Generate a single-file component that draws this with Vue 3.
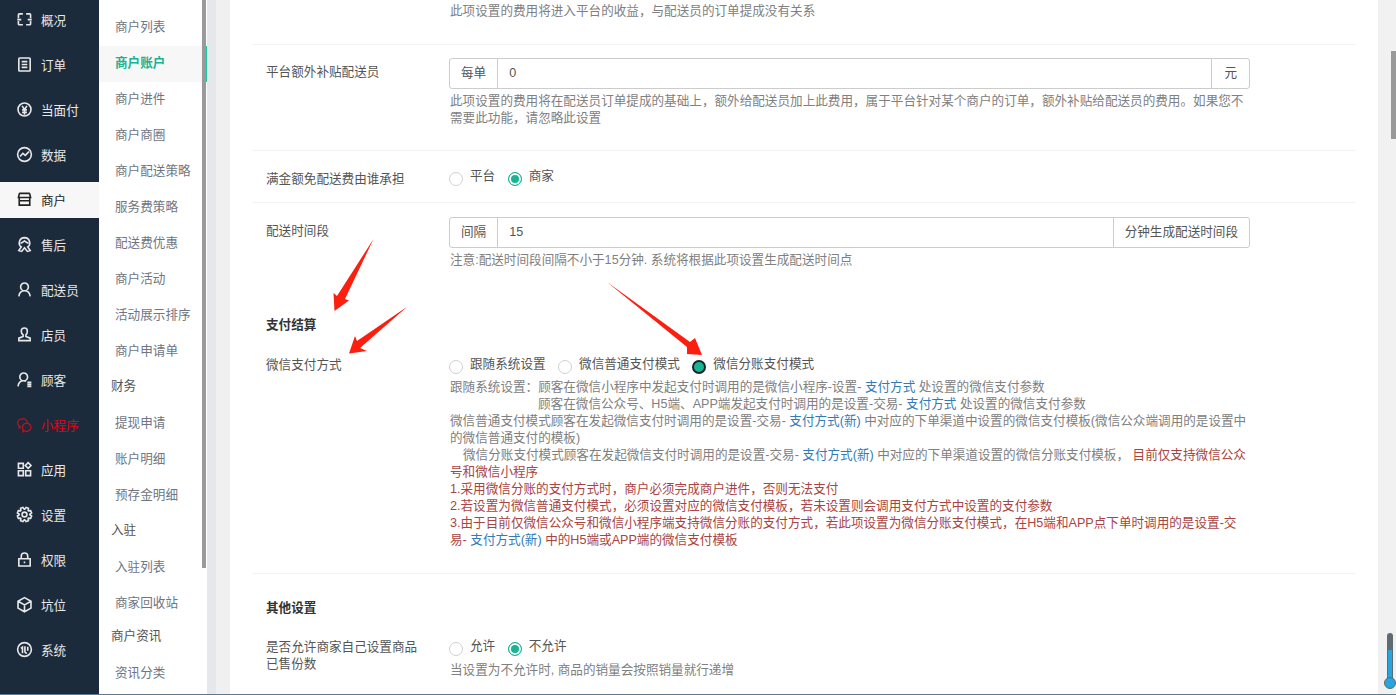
<script setup>
function gearPath() {
  const cx = 10.5, cy = 10.5, pts = []
  const pt = (deg, r) => {
    const a = (deg * Math.PI) / 180
    return (cx + r * Math.cos(a)).toFixed(2) + ' ' + (cy + r * Math.sin(a)).toFixed(2)
  }
  for (let i = 0; i < 8; i++) {
    const c = i * 45 + 22.5
    pts.push(pt(c - 20, 6.6), pt(c - 10, 9), pt(c + 10, 9), pt(c + 20, 6.6))
  }
  return 'M' + pts.join('L') + 'Z M10.5 7.5a3 3 0 1 1 0 6 3 3 0 0 1 0-6z'
}
const navIcons = {
  scan: 'M3 9V4.500a1 1 0 0 1 1-1h4.500M12.500 3.500H17a1 1 0 0 1 1 1V9M3 12.500v3.500a1 1 0 0 0 1 1h4.500M12.500 17H17a1 1 0 0 0 1-1v-3.500M1.500 10.700h5M14.500 10.700h5',
  order: 'M4.500 2.500h12a1 1 0 0 1 1 1v14a1 1 0 0 1-1 1h-12a1 1 0 0 1-1-1v-14a1 1 0 0 1 1-1zM7 7h7M7 10.500h7M7 14h7',
  yen: 'M10.500 2.500a8 8 0 1 1 0 16 8 8 0 0 1 0-16zM7.500 6l3 4.500 3-4.500M7.500 11h6M7.500 14h6M10.500 10.500V17',
  chart: 'M10.500 2a8.500 8.500 0 1 1 0 17 8.500 8.500 0 0 1 0-17zM5 13l3.500-4 3 2.500L16 7',
  shop: 'M5 3h11a1 1 0 0 1 1 .8l1 4.200H3l1-4.200A1 1 0 0 1 5 3zM4 8v9.500h13V8M4 12h13',
  service: 'M10.500 2a6.500 6.500 0 0 1 4 11.600l3 4.400-3.500 1-3.500-4.500-3.500 4.500-3.500-1 3-4.400A6.500 6.500 0 0 1 10.500 2zM5.500 9c2-.5 3.500-2 5-3 1.500 1 3 2.500 5 3',
  rider: 'M10.500 2.500a4.800 4.800 0 1 1 0 9.600 4.800 4.800 0 0 1 0-9.600zM3.500 19c.5-4 3-6.900 7-6.900s6.500 2.900 7 6.900',
  staff: 'M10.500 2.500c2.300 0 3.500 1.700 3.500 4 0 2-.8 3.500-1.800 4.500v2l5.300 2v3h-14v-3l5.300-2v-2C7.300 10 6.500 8.500 6.500 6.500c0-2.300 1.700-4 4-4z',
  customer: 'M9.500 2.500a4.800 4.800 0 1 1 0 9.600 4.800 4.800 0 0 1 0-9.600zM2.500 19c.5-4 3-6.900 7-6.900 1 0 2 .2 2.800.6M14 14h5M14 16.500h5M14 19h5',
  wechat: 'M8 3.500c3.500 0 6 2.200 6 5 0 .4 0 .7-.1 1M8 3.500c-3.300 0-6 2.200-6 5 0 1.700 1 3.100 2.400 4l-.5 2 2.300-1.200M13.500 9a5 5 0 1 1-2.800 9.200L8.500 19.500l.5-2.400A5 5 0 0 1 13.500 9zM11.800 13v.1M15.200 13v.1',
  apps: 'M3 3h6v6H3zM3 12h6v6H3zM12 12h6v6h-6zM15 2l3.500 3.500L15 9l-3.500-3.500z',
  gear: gearPath(),
  lock: 'M3.500 9.500h14v9h-14zM6.500 9.500V6.500a4 4 0 0 1 8 0v3M10.500 13v2',
  box: 'M10.500 2l8 4.500v8.500l-8 4.500-8-4.500V6.500zM2.500 6.500l8 4.500 8-4.500M10.500 11v8.500',
  system: 'M10.500 2a8.500 8.500 0 1 1 0 17 8.500 8.500 0 0 1 0-17zM6 9l2-1.500V15M11 6.500V13c0 1.500 1 2 2 2h.5M14.500 7v5'
}
const nav = [
  { label: '概况', icon: 'scan' }, { label: '订单', icon: 'order' }, { label: '当面付', icon: 'yen' },
  { label: '数据', icon: 'chart' }, { label: '商户', icon: 'shop', active: true }, { label: '售后', icon: 'service' },
  { label: '配送员', icon: 'rider' }, { label: '店员', icon: 'staff' }, { label: '顾客', icon: 'customer' },
  { label: '小程序', icon: 'wechat', red: true }, { label: '应用', icon: 'apps' }, { label: '设置', icon: 'gear' },
  { label: '权限', icon: 'lock' }, { label: '坑位', icon: 'box' }, { label: '系统', icon: 'system' }
]
const sub = [
  { t: '商户列表' }, { t: '商户账户', active: true }, { t: '商户进件' }, { t: '商户商圈' }, { t: '商户配送策略' },
  { t: '服务费策略' }, { t: '配送费优惠' }, { t: '商户活动' }, { t: '活动展示排序' }, { t: '商户申请单' },
  { t: '财务', head: true }, { t: '提现申请' }, { t: '账户明细' }, { t: '预存金明细' },
  { t: '入驻', head: true }, { t: '入驻列表' }, { t: '商家回收站' }, { t: '商户资讯', head: true, cls: 'up2' }, { t: '资讯分类' }
]
</script>

<template>
  <div class="page">
    <nav class="nav">
      <div v-for="n in nav" :key="n.label" class="nav-item" :class="{ active: n.active, red: n.red }">
        <svg class="nav-icon" viewBox="0 0 21 21" fill="none" stroke="currentColor" stroke-width="2"><path :d="navIcons[n.icon]" /></svg>
        <span>{{ n.label }}</span>
      </div>
    </nav>
    <aside class="sub">
      <div class="sub-list">
        <div v-for="s in sub" :key="s.t" class="sub-item" :class="[s.cls, { active: s.active, head: s.head }]">{{ s.t }}</div>
      </div>
      <div class="sub-thumb"></div>
    </aside>
    <div class="gutter-a"></div>
    <div class="gutter-b"></div>
    <main class="main">
      <div class="form">
        <section class="row row-top">
          <div class="help first">此项设置的费用将进入平台的收益，与配送员的订单提成没有关系</div>
        </section>
        <section class="row row-extra">
          <label class="lab">平台额外补贴配送员</label>
          <div class="ctl">
            <div class="group"><span class="addon">每单</span><span class="val">0</span><span class="addon right yuan">元</span></div>
            <div class="help">此项设置的费用将在配送员订单提成的基础上，额外给配送员加上此费用，属于平台针对某个商户的订单，额外补贴给配送员的费用。如果您不需要此功能，请忽略此设置</div>
          </div>
        </section>
        <section class="row row-radio">
          <label class="lab">满金额免配送费由谁承担</label>
          <div class="ctl radios">
            <span class="radio"></span><span class="rt">平台</span>
            <span class="radio on"></span><span class="rt">商家</span>
          </div>
        </section>
        <section class="row row-time">
          <label class="lab">配送时间段</label>
          <div class="ctl">
            <div class="group"><span class="addon">间隔</span><span class="val">15</span><span class="addon right">分钟生成配送时间段</span></div>
            <div class="help">注意:配送时间段间隔不小于15分钟. 系统将根据此项设置生成配送时间点</div>
          </div>
        </section>
        <section class="row-pay">
          <h4 class="title">支付结算</h4>
          <div class="pay-body">
            <label class="lab">微信支付方式</label>
            <div class="ctl">
              <div class="radios">
                <span class="radio"></span><span class="rt">跟随系统设置</span>
                <span class="radio"></span><span class="rt">微信普通支付模式</span>
                <span class="radio on dark"></span><span class="rt">微信分账支付模式</span>
              </div>
              <div class="help note">
                <div>跟随系统设置：顾客在微信小程序中发起支付时调用的是微信小程序-设置- <a>支付方式</a> 处设置的微信支付参数</div>
                <div class="ind1">顾客在微信公众号、H5端、APP端发起支付时调用的是设置-交易- <a>支付方式</a> 处设置的微信支付参数</div>
                <div>微信普通支付模式顾客在发起微信支付时调用的是设置-交易- <a>支付方式(新)</a> 中对应的下单渠道中设置的微信支付模板(微信公众端调用的是设置中的微信普通支付的模板)</div>
                <div class="ind2">微信分账支付模式顾客在发起微信支付时调用的是设置-交易- <a>支付方式(新)</a> 中对应的下单渠道设置的微信分账支付模板， <b>目前仅支持微信公众号和微信小程序</b></div>
                <div class="warn">1.采用微信分账的支付方式时，商户必须完成商户进件，否则无法支付</div>
                <div class="warn">2.若设置为微信普通支付模式，必须设置对应的微信支付模板，若未设置则会调用支付方式中设置的支付参数</div>
                <div class="warn">3.由于目前仅微信公众号和微信小程序端支持微信分账的支付方式，若此项设置为微信分账支付模式，在H5端和APP点下单时调用的是设置-交易- <a>支付方式(新)</a> 中的H5端或APP端的微信支付模板</div>
              </div>
            </div>
          </div>
        </section>
        <section class="row-other">
          <h4 class="title">其他设置</h4>
          <div class="pay-body other-body">
            <label class="lab">是否允许商家自己设置商品已售份数</label>
            <div class="ctl">
              <div class="radios">
                <span class="radio"></span><span class="rt">允许</span>
                <span class="radio on"></span><span class="rt">不允许</span>
              </div>
              <div class="help other-help">当设置为不允许时, 商品的销量会按照销量就行递增</div>
            </div>
          </div>
        </section>
      </div>
    </main>
    <div class="bar">
      <div class="bar-thumb"></div>
    </div>
    <div class="thermo"><div class="thermo-fill"></div><div class="thermo-bulb"></div></div>
    <svg class="arrows" viewBox="0 0 1396 695">
      <path d="M373.500 239 L337 296 L333.500 293 L334.500 311 L349 300.500 L345 299 Z" />
      <path d="M407.500 306.500 L357 341 L355 336 L349 353.500 L367 351 L360 348 Z" />
      <path d="M607 282 L690 342 L695 338 L702 355 L687 354 L687 347 Z" />
    </svg>
    <div class="bottom-line"></div>
  </div>
</template>

<style>
html, body { margin: 0; overflow: hidden; background: #fff; }
</style>

<style scoped>
.page {
  display: flex;
  height: 695px;
  width: 1396px;
  overflow: hidden;
  position: relative;
  font-family: "Liberation Sans", "Noto Sans CJK SC", sans-serif;
  font-size: 12.6px;
  color: #555;
  text-spacing-trim: space-all;
}
.nav { width: 99px; flex: none; background: #1c2b3c; padding-top: 2px; }
.nav-item {
  height: 36px;
  margin-bottom: 9px;
  display: flex;
  align-items: center;
  padding-left: 16px;
  padding-bottom: 2px;
  box-sizing: border-box;
  color: #e8e8e8;
  gap: 8px;
}
.nav-item.active { background: #f7f7f7; color: #222; }
.nav-item.red { color: #e60012; }
.nav-item.red .nav-icon { stroke-width: 1.5; color: #c4121c; }
.nav-icon { width: 17px; height: 17px; flex: none; }
.sub { width: 108px; flex: none; background: #fff; position: relative; overflow: hidden; }
.sub-list { margin-top: 10px; }
.sub-item { height: 36px; line-height: 34px; padding-left: 16px; color: #6f7682; white-space: nowrap; }
.sub-item.active { background: #f7f7f7; color: #1ab394; font-weight: 700; box-shadow: inset -1px 0 0 #19c7a7; }
.sub-item.head { color: #555; padding-left: 12px; line-height: 33px; }
.sub-item.up2 { margin-top: -2px; }
.sub-thumb { position: absolute; right: 1px; top: 0; width: 4px; height: 568px; background: #9a9a9a; }
.gutter-a { width: 9px; background: #e6e7eb; flex: none; }
.gutter-b { width: 14px; background: #f0f0f0; flex: none; }
.main { width: 1148px; flex: none; background: #fff; overflow: hidden; }
.form { margin-left: 22px; width: 1104px; }
.row { border-bottom: 1px solid #f1f4f3; display: flex; box-sizing: border-box; padding-left: 14px; }
.row-top { height: 45px; padding-left: 198px; }
.row-extra { height: 106px; padding-top: 13px; }
.row-radio { height: 52px; padding-top: 14px; }
.row-time { height: 92px; padding-top: 14px; border-bottom: 0; }
.lab { width: 183px; flex: none; line-height: 18px; color: #555; display: block; padding-top: 5px; box-sizing: border-box; padding-right: 29px; }
.ctl { width: 801px; flex: none; }
.group { display: flex; height: 31px; border: 1px solid #ccc; border-radius: 3px; box-sizing: border-box; line-height: 29px; }
.addon { padding: 0 11px; color: #555; flex: none; border-right: 1px solid #ccc; }
.addon.right { border-right: 0; border-left: 1px solid #ccc; }
.addon.yuan { padding: 0 12px; }
.val { flex: 1; padding-left: 11px; color: #555; }
.help { color: #808080; line-height: 17px; margin-top: 4px; padding-left: 1px; }
.help.first { margin-top: 3px; padding-left: 0; }
.radios { display: flex; align-items: center; height: 22px; }
.radio { width: 14px; height: 14px; border: 1px solid #d0d0d0; border-radius: 50%; box-sizing: border-box; margin-right: 7px; margin-top: 5px; background: #fff; flex: none; }
.radio.on { background: #1ab394; box-shadow: inset 0 0 0 2px #fff; border-color: #1ab394; }
.radio.dark { background: #1ab394; box-shadow: none; border: 2px solid #17262a; }
.rt { margin-right: 12.5px; margin-bottom: 3px; color: #555; }
.row-pay { height: 279px; border-bottom: 1px solid #f1f4f3; box-sizing: border-box; padding-left: 14px; overflow: hidden; }
.title { margin: 21px 0 0; font-size: 12.6px; line-height: 18px; font-weight: 700; color: #333; }
.pay-body { display: flex; margin-top: 19px; }
.pay-body .lab { padding-top: 3px; }
.note { margin-top: 4px; }
.note a { color: #337ab7; }
.note b { color: #a94442; font-weight: 400; }
.ind1 { padding-left: 88px; }
.ind2 { text-indent: 13px; }
.warn { color: #a94442; }
.row-other { padding-left: 14px; overflow: hidden; }
.row-other .title { margin-top: 25px; }
.other-body { margin-top: 18px; }
.other-body .lab { line-height: 17px; padding-top: 4px; }
.other-help { margin-top: 5px; }
.bar { flex: 1; background: #f1f1f1; position: relative; }
.bar-thumb { position: absolute; right: 0; top: 51px; width: 5px; height: 88px; background: #999; }
.thermo { position: absolute; left: 1387px; top: 633px; width: 6px; height: 50px; background: #5e6b73; border-radius: 3px; }
.thermo-fill { position: absolute; left: 1px; right: 1px; top: 17px; bottom: 0; background: #2aa4dc; }
.thermo-bulb { position: absolute; left: -3px; bottom: -6px; width: 10px; height: 10px; background: #2aa4dc; border: 1px solid #5e6b73; border-radius: 50%; }
.arrows { position: absolute; left: 0; top: 0; width: 1396px; height: 695px; pointer-events: none; fill: #fb1f10; }
.bottom-line { position: absolute; left: 0; right: 0; bottom: 0; height: 1px; background: #5a7b94; }
</style>
